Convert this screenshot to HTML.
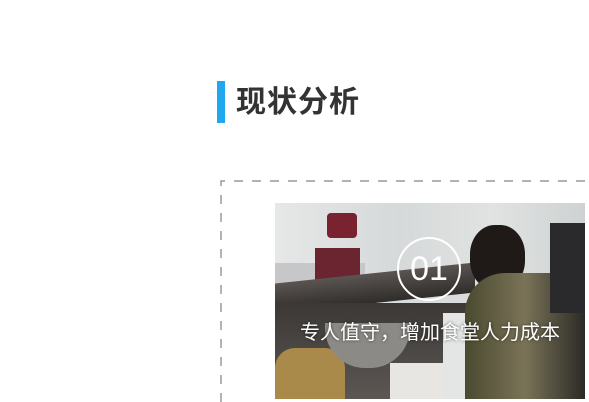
<!DOCTYPE html>
<html><head><meta charset="utf-8"><style>
html,body{margin:0;width:589px;height:402px;background:#fff;overflow:hidden}
body{position:relative;font-family:"Liberation Sans","Noto Sans CJK SC",sans-serif}
.bar{position:absolute;left:217px;top:81px;width:8px;height:42px;background:#1fa8f0}
.t{position:absolute;left:236px;top:83px;font-size:30px;font-weight:bold;color:#333;letter-spacing:1px;line-height:40px}
.img{position:absolute;left:275px;top:203px;width:310px;height:196px;overflow:hidden;background:#d9dcdc}
.img div{position:absolute}
.circ{position:absolute;left:397px;top:237px;width:60px;height:60px;border:2px solid #fff;border-radius:50%;color:#fff;font-size:34px;text-align:center;line-height:60px}
.cap{position:absolute;left:275px;width:310px;top:316px;text-align:center;color:#fff;font-size:20px;text-shadow:0 0 3px rgba(0,0,0,.6)}
</style></head><body>
<div class="bar"></div>
<div class="t">现状分析</div>
<svg style="position:absolute;left:0;top:0" width="589" height="402"><path d="M221 402 V181 H589" fill="none" stroke="#9a9a9a" stroke-width="1.5" stroke-dasharray="9 9"/></svg>
<div class="img">
<div style="left:0;top:0;width:310px;height:90px;background:linear-gradient(90deg,#e6e8e8,#d6d9d9 40%,#e0e3e2 70%,#cfd2d2)"></div>
<div style="left:0;top:60px;width:90px;height:50px;background:#c7c7c9"></div>
<div style="left:52px;top:10px;width:30px;height:25px;background:#7a2330;border-radius:4px"></div>
<div style="left:40px;top:45px;width:45px;height:100px;background:#6a2530"></div>
<div style="left:0;top:70px;width:200px;height:30px;background:linear-gradient(#5b5552,#2f2c2a);transform:skewY(-6deg)"></div>
<div style="left:0;top:100px;width:200px;height:96px;background:linear-gradient(#3b3836,#5c5753)"></div>
<div style="left:0;top:145px;width:70px;height:51px;background:#a98a4a;border-radius:20px 20px 0 0"></div>
<div style="left:50px;top:120px;width:85px;height:45px;background:#8c8a86;border-radius:0 0 40px 40px"></div>
<div style="left:115px;top:160px;width:60px;height:36px;background:#e8e6e2"></div>
<div style="left:168px;top:110px;width:60px;height:86px;background:#e4e6e6"></div>
<div style="left:195px;top:22px;width:55px;height:65px;background:#1f1a18;border-radius:45%"></div>
<div style="left:190px;top:70px;width:120px;height:126px;background:linear-gradient(90deg,#4a4a30,#7a7358 50%,#2b2a25);border-radius:40px 30px 0 0"></div>
<div style="left:275px;top:20px;width:35px;height:90px;background:#2a2a2c"></div>
</div>
<div class="circ">01</div>
<div class="cap">专人值守，增加食堂人力成本</div>
</body></html>
